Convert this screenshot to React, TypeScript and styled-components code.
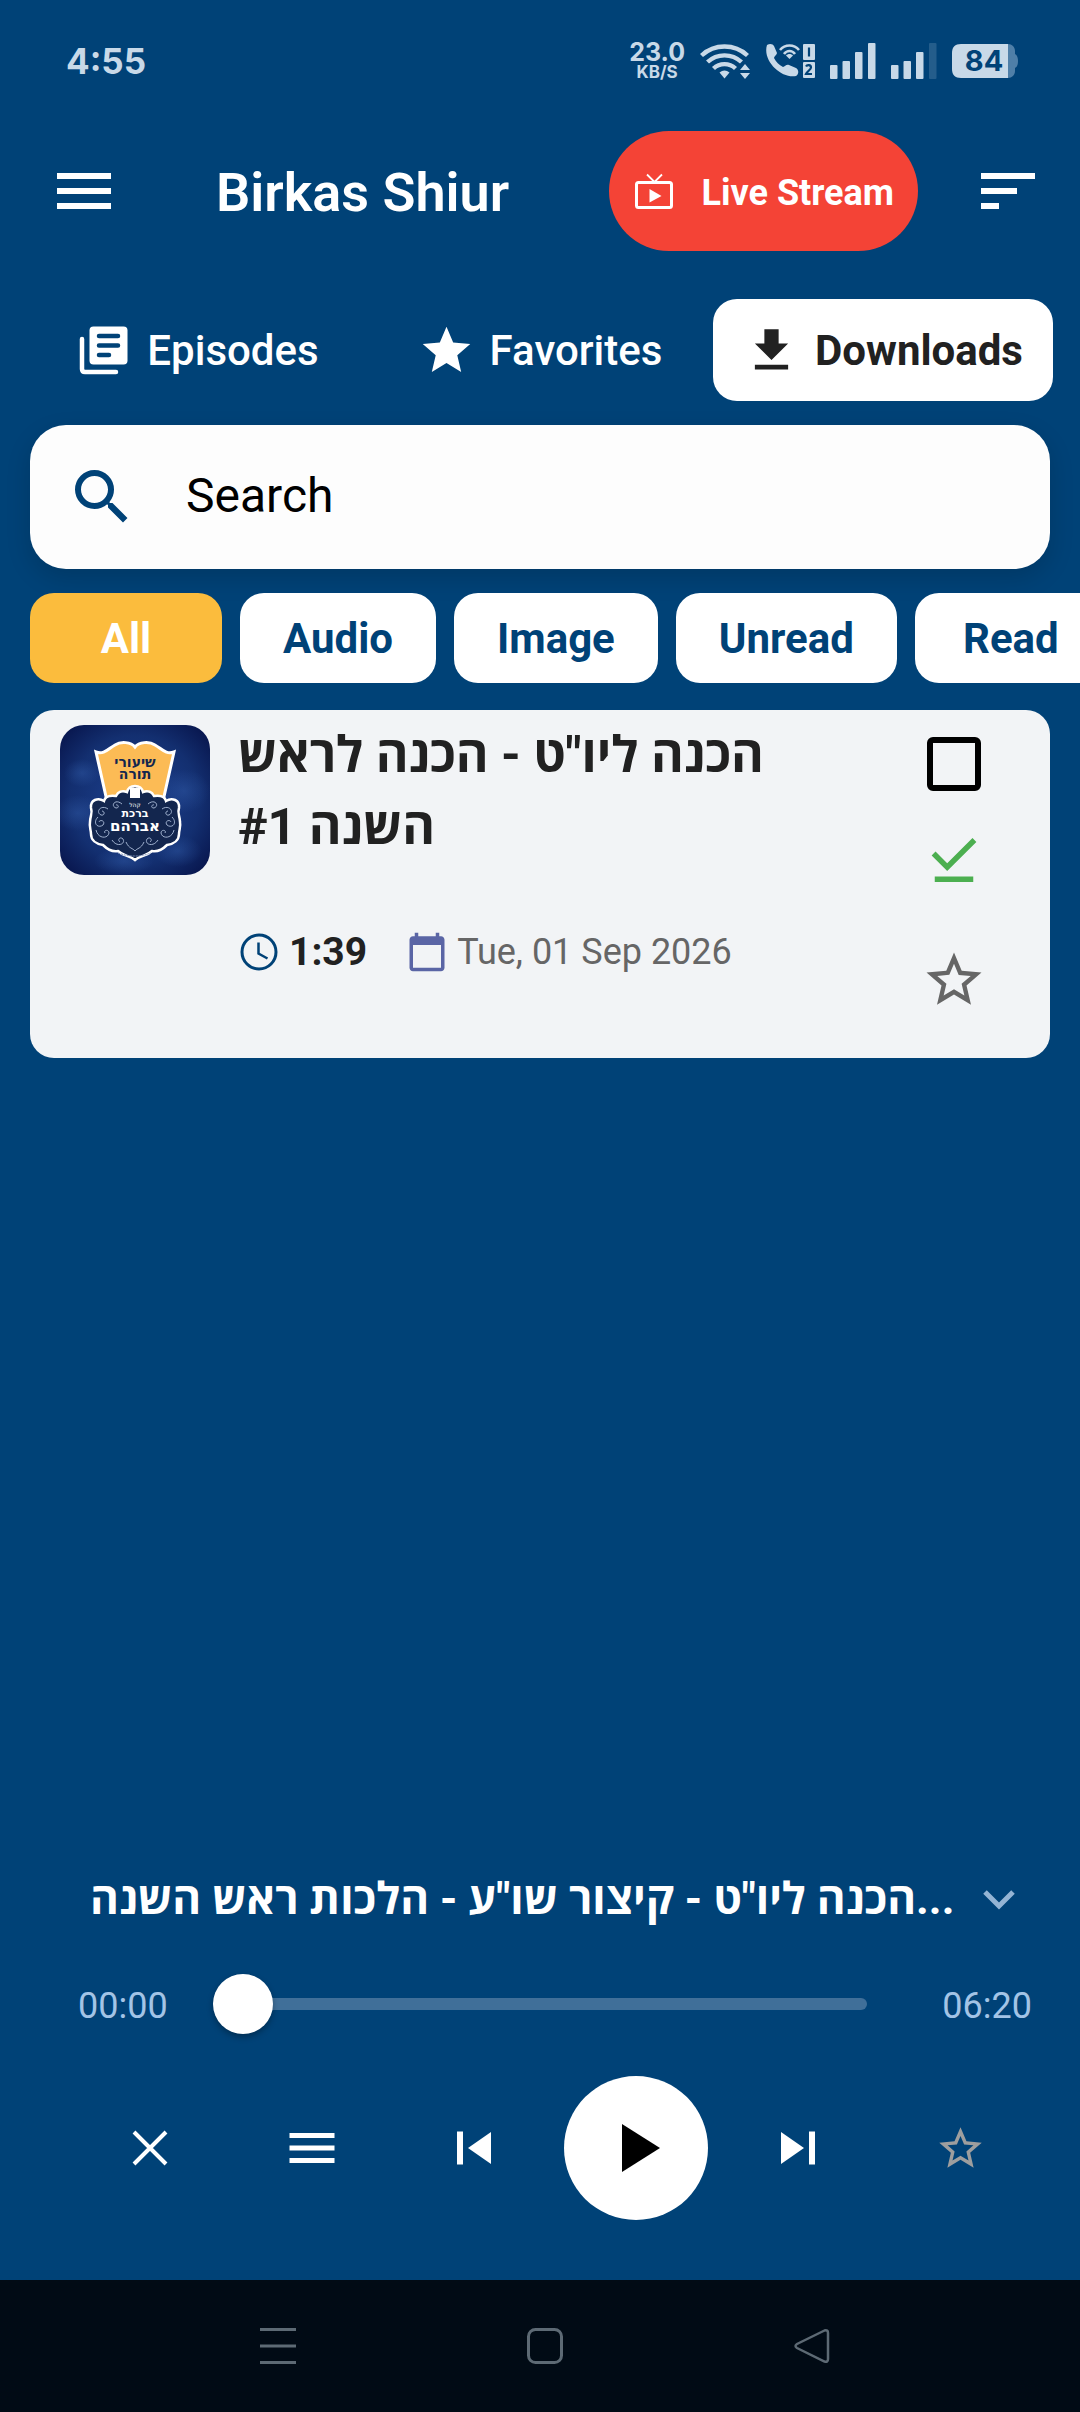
import React from 'react';
import styled, { createGlobalStyle } from 'styled-components';
import { MdMenu, MdSort, MdStar, MdSearch, MdDownloadDone, MdStarBorder, MdCalendarToday } from 'react-icons/md';

const NAVY = '#004277';
const SYSTEM = '#c8d9e8';

const Global = createGlobalStyle`
  * { box-sizing: border-box; }
  body { margin: 0; background: ${NAVY}; }
  button, input { font: inherit; color: inherit; }
  svg { display: block; flex: none; }
`;

const Screen = styled.div`
  min-height: 100vh;
  display: flex;
  flex-direction: column;
  overflow: hidden;
  background: ${NAVY};
  color: #fff;
  font-family: Roboto, 'Open Sans', sans-serif;
`;

const StatusBar = styled.div`
  height: 122px;
  padding: 0 62px 0 66px;
  display: flex;
  align-items: center;
  justify-content: space-between;
  color: ${SYSTEM};
  font-family: Inter, sans-serif;
  font-weight: 700;
`;
const Clock = styled.span`
  font-size: 35px;
  line-height: 40px;
`;
const Indicators = styled.div`
  display: flex;
  align-items: center;
  gap: 15px;
`;
const Speed = styled.div`
  display: flex;
  flex-direction: column;
  align-items: center;
`;
const SpeedValue = styled.span`
  font-size: 25px;
  line-height: 23px;
`;
const SpeedUnit = styled.span`
  font-size: 17px;
  line-height: 17px;
`;

const Header = styled.header`
  display: flex;
  align-items: center;
  padding: 9px 36px 0 48px;
`;
const Title = styled.h1`
  flex: 1;
  margin: 3px 0 0 96px;
  font-size: 54px;
  line-height: 64px;
  font-weight: 600;
`;
const PlainButton = styled.button`
  border: 0;
  padding: 0;
  background: none;
  display: flex;
  align-items: center;
  justify-content: center;
`;
const LiveButton = styled(PlainButton)`
  height: 120px;
  padding: 3px 24px 0;
  margin-right: 54px;
  gap: 27px;
  border-radius: 60px;
  background: #f44336;
  font-size: 36px;
  font-weight: 700;
`;

const Tabs = styled.nav`
  margin-top: 48px;
  padding: 0 27px;
  display: flex;
  gap: 3px;
`;
const Tab = styled(PlainButton)<{ $active?: boolean }>`
  flex: 1;
  height: 102px;
  gap: 15px;
  border-radius: 24px;
  font-size: 42px;
  font-weight: ${p => (p.$active ? 700 : 500)};
  background: ${p => (p.$active ? '#fff' : 'transparent')};
  color: ${p => (p.$active ? '#212121' : '#fff')};
`;

const SearchBox = styled.label`
  height: 144px;
  margin: 24px 30px;
  padding: 0 36px;
  display: flex;
  align-items: center;
  gap: 48px;
  border-radius: 36px;
  background: #fdfdfd;
  color: ${NAVY};
  box-shadow: 0 9px 24px rgba(0, 0, 0, 0.15);
`;
const SearchInput = styled.input`
  flex: 1;
  min-width: 0;
  border: 0;
  padding: 0 0 4px;
  outline: 0;
  background: none;
  font-size: 48px;
  color: #000;
  &::placeholder { color: #000; opacity: 1; }
`;

const Chips = styled.div`
  display: flex;
  gap: 18px;
  padding-left: 30px;
  overflow: hidden;
`;
const Chip = styled(PlainButton)<{ $active?: boolean }>`
  flex: none;
  min-width: 192px;
  height: 90px;
  padding: 0 43px;
  border-radius: 24px;
  font-size: 42px;
  font-weight: 700;
  background: ${p => (p.$active ? '#fbbc3d' : '#fff')};
  color: ${p => (p.$active ? '#fff' : NAVY)};
`;

const Card = styled.article`
  margin: 27px 30px 0;
  padding: 6px 24px 6px 30px;
  display: flex;
  border-radius: 24px;
  background: #f2f4f6;
  color: #212121;
`;
const Cover = styled.div`
  width: 150px;
  height: 150px;
  margin-top: 9px;
  border-radius: 24px;
  overflow: hidden;
`;
const Details = styled.div`
  flex: 1;
  padding: 3px 0 0 28px;
`;
const Episode = styled.h2`
  margin: 0;
  max-width: 600px;
  font-size: 50px;
  line-height: 72px;
  font-weight: 700;
  direction: rtl;
  text-align: left;
`;
const Meta = styled.div`
  margin-top: 65px;
  display: flex;
  align-items: center;
  gap: 39px;
`;
const MetaItem = styled.span<{ $strong?: boolean }>`
  display: flex;
  align-items: center;
  gap: 9px;
  font-size: ${p => (p.$strong ? 39 : 36)}px;
  line-height: 48px;
  font-weight: ${p => (p.$strong ? 700 : 400)};
  color: ${p => (p.$strong ? '#212121' : '#666')};
`;
const Actions = styled.div`
  width: 144px;
  display: flex;
  flex-direction: column;
`;
const Action = styled(PlainButton)<{ $tall?: boolean; $color: string }>`
  height: ${p => (p.$tall ? 144 : 96)}px;
  color: ${p => p.$color};
`;
const TickLabel = styled.label`
  height: 96px;
  display: flex;
  align-items: center;
  justify-content: center;
`;
const Tick = styled.input`
  appearance: none;
  width: 54px;
  height: 54px;
  margin: 0;
  border: 6px solid #000;
  border-radius: 6px;
  &:checked { background: #000; }
`;

const Player = styled.section`
  margin-top: auto;
  padding-bottom: 60px;
`;
const NowPlaying = styled.div`
  padding: 0 48px 0 90px;
  display: flex;
  align-items: center;
  justify-content: space-between;
`;
const NowTitle = styled.p`
  margin: 0;
  flex: 1;
  white-space: nowrap;
  font-size: 44px;
  line-height: 60px;
  font-weight: 700;
`;
const Seek = styled.div`
  height: 96px;
  margin-top: 24px;
  padding: 0 48px 0 78px;
  display: flex;
  align-items: center;
  color: #a3c4e6;
  font-size: 36px;
`;
const Time = styled.span`
  padding-top: 3px;
`;
const SeekBar = styled.input`
  appearance: none;
  flex: 1;
  min-width: 0;
  height: 60px;
  margin: 0 75px 0 45px;
  background: none;
  &::-webkit-slider-runnable-track {
    height: 12px;
    border-radius: 6px;
    background: #406f99;
  }
  &::-webkit-slider-thumb {
    appearance: none;
    width: 60px;
    height: 60px;
    margin-top: -24px;
    border-radius: 50%;
    background: #fff;
    box-shadow: 0 3px 6px rgba(0, 0, 0, 0.3);
  }
`;
const Controls = styled.div`
  margin-top: 24px;
  padding: 0 48px 0 78px;
  display: flex;
  justify-content: space-between;
`;
const Control = styled(PlainButton)<{ $primary?: boolean }>`
  width: 144px;
  height: 144px;
  border-radius: 50%;
  background: ${p => (p.$primary ? '#fff' : 'transparent')};
`;

const NavBar = styled.nav`
  height: 132px;
  padding: 0 135px 0 144px;
  display: flex;
  background: #010b15;
  color: #5d6a74;
`;
const NavButton = styled(PlainButton)`
  flex: 1;
`;

const WifiIcon = () => (
  <svg width="50" height="38" viewBox="0 0 50 38" fill="none" stroke={SYSTEM} strokeWidth="4.4">
    <path d="M1.500 13.500a34 34 0 0 1 46 0M7.500 20a25 25 0 0 1 34 0M13.500 26.500a16 16 0 0 1 22 0" />
    <path d="M24.500 36.500l-5-6a8 8 0 0 1 10 0z" fill={SYSTEM} stroke="none" />
    <path d="M45 22l5 6H40zM45 37l-5-6h10z" fill={SYSTEM} stroke="none" />
  </svg>
);
const CallIcon = () => (
  <svg width="50" height="36" viewBox="0 0 50 36" fill="none">
    <path d="M2 2c3-2 6-1 7 1l3 7c0 2-3 3-3 5 2 4 5 7 9 9 2 0 3-3 6-2l7 3c3 2 3 6 0 8C17 36-3 18 2 2z" fill={SYSTEM} />
    <path d="M15 7c5-6 14-6 19 0M19 11c3-4 8-4 11 0" stroke={SYSTEM} strokeWidth="2.600" />
    <path d="M24.500 16l-3.500-3.500c2-2 5-2 7 0z" fill={SYSTEM} />
    <rect x="38" y="1" width="12" height="16" rx="1" fill={SYSTEM} />
    <rect x="38" y="19" width="12" height="16" rx="1" fill={SYSTEM} />
    <path d="M44 4.500v9M41 23.500c1-2 5-2 5 1 0 2-4 4-5 6.500h6" stroke={NAVY} strokeWidth="2.200" />
  </svg>
);
const SignalIcon = ({ faint }: { faint?: boolean }) => (
  <svg width="46" height="36" viewBox="0 0 46 36" fill={SYSTEM}>
    <rect y="22" width="7.500" height="14" rx="1" />
    <rect x="12.500" y="18" width="7.500" height="18" rx="1" />
    <rect x="25" y="9" width="7.500" height="27" rx="1" />
    <rect x="38" width="7.500" height="36" rx="1" opacity={faint ? 0.18 : 1} />
  </svg>
);
const BatteryIcon = () => (
  <svg width="66" height="34" viewBox="0 0 66 34">
    <path d="M56 0c4 0 7 3 7 7v3c2 1 3 3 3 7s-1 6-3 7v3c0 4-3 7-7 7z" fill="#4f7fa8" />
    <path d="M9 0h47v34H9c-6 0-9-3-9-9V9c0-6 3-9 9-9z" fill={SYSTEM} />
    <text x="32" y="27" textAnchor="middle" fontSize="29" fontWeight="700" fontFamily="Inter, sans-serif" fill={NAVY}>84</text>
  </svg>
);
const TvIcon = () => (
  <svg width="42" height="42" viewBox="0 0 42 42" fill="none" stroke="#fff">
    <rect x="3.500" y="10.500" width="35" height="25" rx="2" strokeWidth="3" />
    <path d="M14 2.500l7.500 7.500L29 2.500" strokeWidth="1.800" />
    <path d="M16.500 17v13.500L28.500 24z" fill="#fff" stroke="none" />
  </svg>
);
const EpisodesIcon = () => (
  <svg width="57" height="57" viewBox="0 0 57 57" fill="none" strokeLinecap="round">
    <rect x="14.500" y="4.500" width="38" height="38" rx="4" fill="currentColor" />
    <path d="M24 14h19M24 23.500h19M24 33h10" stroke={NAVY} strokeWidth="4.500" />
    <path d="M7 17v30q0 3 3 3h31" stroke="currentColor" strokeWidth="4.500" />
  </svg>
);
const DownloadIcon = () => (
  <svg width="57" height="57" viewBox="0 0 24 24" fill="currentColor">
    <path d="M19 9h-4V3H9v6H5l7 7 7-7zM5 18v2h14v-2H5z" />
  </svg>
);
const TimeIcon = () => (
  <svg width="42" height="42" viewBox="0 0 42 42" fill="none" stroke={NAVY} strokeWidth="3">
    <circle cx="21" cy="21" r="17" />
    <path d="M20.500 11.500v11l9 5" strokeWidth="2.500" />
  </svg>
);

const CoverArt = () => (
  <svg width="150" height="150" viewBox="0 0 150 150">
    <defs>
      <radialGradient id="night" cx="50%" cy="50%" r="72%">
        <stop offset="0" stopColor="#1d4190" />
        <stop offset="0.6" stopColor="#132f70" />
        <stop offset="1" stopColor="#050f44" />
      </radialGradient>
      <radialGradient id="cloud">
        <stop offset="0" stopColor="#3a68b8" stopOpacity="0.35" />
        <stop offset="1" stopColor="#3a68b8" stopOpacity="0" />
      </radialGradient>
    </defs>
    <rect width="150" height="150" fill="url(#night)" />
    <g fill="url(#cloud)">
      <ellipse cx="124" cy="66" rx="26" ry="22" />
      <ellipse cx="18" cy="88" rx="24" ry="18" />
      <ellipse cx="64" cy="136" rx="30" ry="14" />
      <ellipse cx="118" cy="126" rx="24" ry="16" />
      <ellipse cx="22" cy="48" rx="18" ry="14" />
    </g>
    <path d="M36 27c8 3 12-3 19-7 6-4 16-3 20 2 4-5 14-6 20-2 7 4 11 10 19 7l-11 49H47z" fill="#fcbb55" stroke="#fff" strokeWidth="3" />
    <path d="M75 61c5 0 7 2 8 6 5-2 9 0 11 4 7-1 11 1 12 5 6-4 14-1 13 7-2 5 1 8 1 14 1 5-1 8-1 12 0 6-5 10-12 11-5 5-10 7-15 6-5 5-11 4-17 9-6-5-12-4-17-9-5 1-10-1-15-6-7-1-12-5-12-11 0-4-2-7-1-12 0-6 3-9 1-14-1-8 7-11 13-7 1-4 5-6 12-5 2-4 6-6 11-4 1-4 3-6 8-6z" fill="#13264e" stroke="#fff" strokeWidth="2.500" />
    <g fill="none" stroke="#9fb0cd" strokeWidth="1">
      <path d="M48 84c-7-5-13 3-7 6 4 1 4-4 1-4M38 92c-6 6 0 12 5 8 3-4-3-6-4-3M36 105c2 9 12 9 13 3 0-4-6-3-4 0M52 115c5 8 14 4 11-1-3-3-6 1-3 3M62 79c-7-6-12 2-6 4 4 0 2-4 0-3M66 117c3 7 7 6 9 9" />
      <path d="M102 84c7-5 13 3 7 6-4 1-4-4-1-4M112 92c6 6 0 12-5 8-3-4 3-6 4-3M114 105c-2 9-12 9-13 3 0-4 6-3 4 0M98 115c-5 8-14 4-11-1 3-3 6 1 3 3M88 79c7-6 12 2 6 4-4 0-2-4 0-3M84 117c-3 7-7 6-9 9" />
    </g>
    <path d="M70 63c2-1 4-1 5 0 1-1 3-1 5 0v10H70z" fill="#fff" />
    <g textAnchor="middle" fontFamily="'DejaVu Sans', sans-serif" fontWeight="700">
      <text x="75" y="42" fontSize="14" fill="#13264e">שיעורי</text>
      <text x="75" y="54" fontSize="14" fill="#13264e">תורה</text>
      <text x="75" y="82" fontSize="6" fontWeight="400" fill="#fff">קהל</text>
      <text x="75" y="92" fontSize="11" fill="#fff">ברכת</text>
      <text x="75" y="106" fontSize="15" fill="#fff">אברהם</text>
    </g>
    <path d="M58 128q17 6 33 0" fill="none" stroke="#7f93bb" strokeWidth="1" strokeDasharray="2 1" />
  </svg>
);

export default function App() {
  return (
    <Screen>
      <Global />
      <StatusBar>
        <Clock>4:55</Clock>
        <Indicators>
          <Speed><SpeedValue>23.0</SpeedValue><SpeedUnit>KB/S</SpeedUnit></Speed>
          <WifiIcon /><CallIcon /><SignalIcon /><SignalIcon faint /><BatteryIcon />
        </Indicators>
      </StatusBar>
      <Header>
        <PlainButton aria-label="Menu"><MdMenu size={72} /></PlainButton>
        <Title>Birkas Shiur</Title>
        <LiveButton><TvIcon />Live Stream</LiveButton>
        <PlainButton aria-label="Sort"><MdSort size={72} /></PlainButton>
      </Header>
      <Tabs>
        <Tab><EpisodesIcon />Episodes</Tab>
        <Tab><MdStar size={57} />Favorites</Tab>
        <Tab $active><DownloadIcon />Downloads</Tab>
      </Tabs>
      <SearchBox>
        <MdSearch size={72} />
        <SearchInput type="text" placeholder="Search" aria-label="Search" />
      </SearchBox>
      <Chips>
        <Chip $active>All</Chip>
        <Chip>Audio</Chip>
        <Chip>Image</Chip>
        <Chip>Unread</Chip>
        <Chip>Read</Chip>
      </Chips>
      <Card>
        <Cover><CoverArt /></Cover>
        <Details>
          <Episode>הכנה ליו"ט - הכנה לראש השנה #1</Episode>
          <Meta>
            <MetaItem $strong><TimeIcon />1:39</MetaItem>
            <MetaItem><MdCalendarToday size={42} color="#5a65a5" />Tue, 01 Sep 2026</MetaItem>
          </Meta>
        </Details>
        <Actions>
          <TickLabel><Tick type="checkbox" aria-label="Select episode" /></TickLabel>
          <Action $color="#4caf50" aria-label="Downloaded"><MdDownloadDone size={66} /></Action>
          <Action $tall $color="#666" aria-label="Add to favorites"><MdStarBorder size={66} /></Action>
        </Actions>
      </Card>
      <Player>
        <NowPlaying>
          <NowTitle>הכנה ליו"ט - קיצור שו"ע - הלכות ראש השנה...</NowTitle>
          <PlainButton aria-label="Collapse player">
            <svg width="66" height="66" viewBox="0 0 66 66" fill="none" stroke="#94b4d4" strokeWidth="5"><path d="M19 26l14 14 14-14" /></svg>
          </PlainButton>
        </NowPlaying>
        <Seek>
          <Time>00:00</Time>
          <SeekBar type="range" min="0" max="380" defaultValue="0" aria-label="Position" />
          <Time>06:20</Time>
        </Seek>
        <Controls>
          <Control aria-label="Close">
            <svg width="42" height="42" viewBox="0 0 42 42" stroke="#fff" strokeWidth="4"><path d="M5 5l32 32M37 5L5 37" /></svg>
          </Control>
          <Control aria-label="Queue"><MdMenu size={60} /></Control>
          <Control aria-label="Previous">
            <svg width="42" height="42" viewBox="0 0 42 42" fill="#fff"><path d="M4 4.500h6v33H4zM38 5v32L15 21z" /></svg>
          </Control>
          <Control $primary aria-label="Play">
            <svg width="60" height="60" viewBox="0 0 60 60"><path d="M16 6v48l38-24z" /></svg>
          </Control>
          <Control aria-label="Next">
            <svg width="42" height="42" viewBox="0 0 42 42" fill="#fff"><path d="M32 4.500h6v33h-6zM4 5v32l23-16z" /></svg>
          </Control>
          <Control aria-label="Favorite"><MdStarBorder size={51} color="#9e9e9e" /></Control>
        </Controls>
      </Player>
      <NavBar>
        <NavButton aria-label="Recent apps">
          <svg width="36" height="38" viewBox="0 0 36 38" stroke="currentColor" strokeWidth="3"><path d="M0 2.500h36M0 19h36M0 35.500h36" /></svg>
        </NavButton>
        <NavButton aria-label="Home">
          <svg width="38" height="38" viewBox="0 0 38 38" fill="none" stroke="currentColor" strokeWidth="3"><rect x="2.500" y="2.500" width="33" height="33" rx="7" /></svg>
        </NavButton>
        <NavButton aria-label="Back">
          <svg width="38" height="38" viewBox="0 0 38 38" fill="none" stroke="currentColor" strokeWidth="2.500"><path d="M31.500 3.500L4 17q-3 2 0 4l27.500 13.500q3.500 1 3.500-2.500V6q0-3.500-3.500-2.500z" /></svg>
        </NavButton>
      </NavBar>
    </Screen>
  );
}
